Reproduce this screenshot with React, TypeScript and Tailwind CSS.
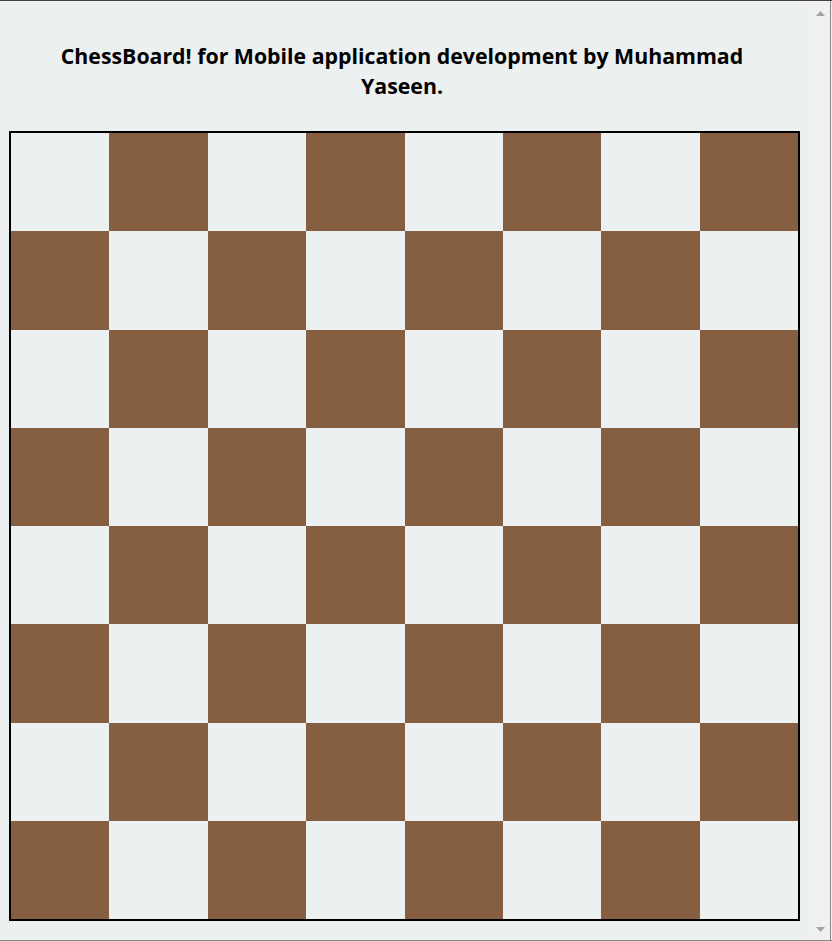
const LIGHT = "bg-[#ecf0f1]";
const DARK = "bg-[#865e42]";

function Board() {
  const rows = [0, 1, 2, 3, 4, 5, 6, 7];
  return (
    <div className="mx-[9px] w-[791px] h-[790px] border-2 border-black grid grid-cols-8 grid-rows-8">
      {rows.map((r) =>
        rows.map((c) => (
          <div key={r + "-" + c} className={(r + c) % 2 === 0 ? LIGHT : DARK} />
        ))
      )}
    </div>
  );
}

function Scrollbar() {
  return (
    <div className="w-[20px] bg-[#f0f0f0] flex flex-col items-center justify-between pt-[10px] pb-[8px]">
      <svg width="9" height="5" viewBox="0 0 9 5">
        <polygon points="0,5 9,5 4.5,0" fill="#a3a3a3" />
      </svg>
      <svg width="9" height="5" viewBox="0 0 9 5">
        <polygon points="0,0 9,0 4.5,5" fill="#a3a3a3" />
      </svg>
    </div>
  );
}

export default function App() {
  return (
    <div className="w-[832px] h-[941px] flex flex-col bg-[#ecf0f1] overflow-hidden">
      <div className="h-px bg-[#444]" />
      <div className="flex flex-1 min-h-0">
        <div className="w-[810px] flex flex-col">
          <h1
            className="ml-[42px] mt-[40px] w-[720px] text-center text-[21.3px] leading-[30px] font-bold text-black"
            style={{ fontFamily: '"Open Sans", "Noto Sans", sans-serif' }}
          >
            ChessBoard! for Mobile application development by Muhammad Yaseen.
          </h1>
          <div className="mt-[30px]">
            <Board />
          </div>
        </div>
        <Scrollbar />
        <div className="w-px bg-[#888]" />
        <div className="w-px bg-[#f0f0f0]" />
      </div>
      <div className="h-px bg-[#888]" />
    </div>
  );
}
